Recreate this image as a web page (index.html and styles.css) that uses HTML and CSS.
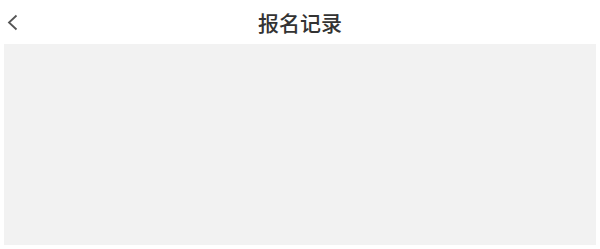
FILE: index.html
```html
<!DOCTYPE html>
<html lang="zh-CN">
<head>
  <meta charset="UTF-8" />
  <meta name="viewport" content="width=device-width, initial-scale=1.0" />
  <title>报名记录</title>
  <link rel="stylesheet" href="styles.css">
</head>
<body>
  <div class="header">
    <button class="back" aria-label="返回">
      <svg width="13" height="17" viewBox="0 0 13 17">
        <path d="M10.5 1.5 L3 8.5 L10.5 15.5" fill="none" stroke="#555" stroke-width="1.8" />
      </svg>
    </button>
    <h1 class="title">报名记录</h1>
  </div>
  <div class="content"></div>
</body>
</html>
```

FILE: styles.css
```css
body {
  margin: 0;
  font-family: "Noto Sans CJK SC", "Noto Sans", sans-serif;
  background-color: #fff;
  color: #333;
  height: 100vh;
  display: flex;
  flex-direction: column;
}
.header {
  height: 44px;
  display: flex;
  align-items: center;
  justify-content: center;
  position: relative;
}
.back {
  position: absolute;
  left: 6px;
  top: 14px;
  padding: 0;
  border: none;
  background: none;
  display: flex;
}
.title {
  margin: 0;
  font-size: 21px;
  font-weight: 500;
  color: #333;
  line-height: 1;
}
.content {
  margin: 0 4px 4px 4px;
  height: 201px;
  background-color: #f2f2f2;
}
```
